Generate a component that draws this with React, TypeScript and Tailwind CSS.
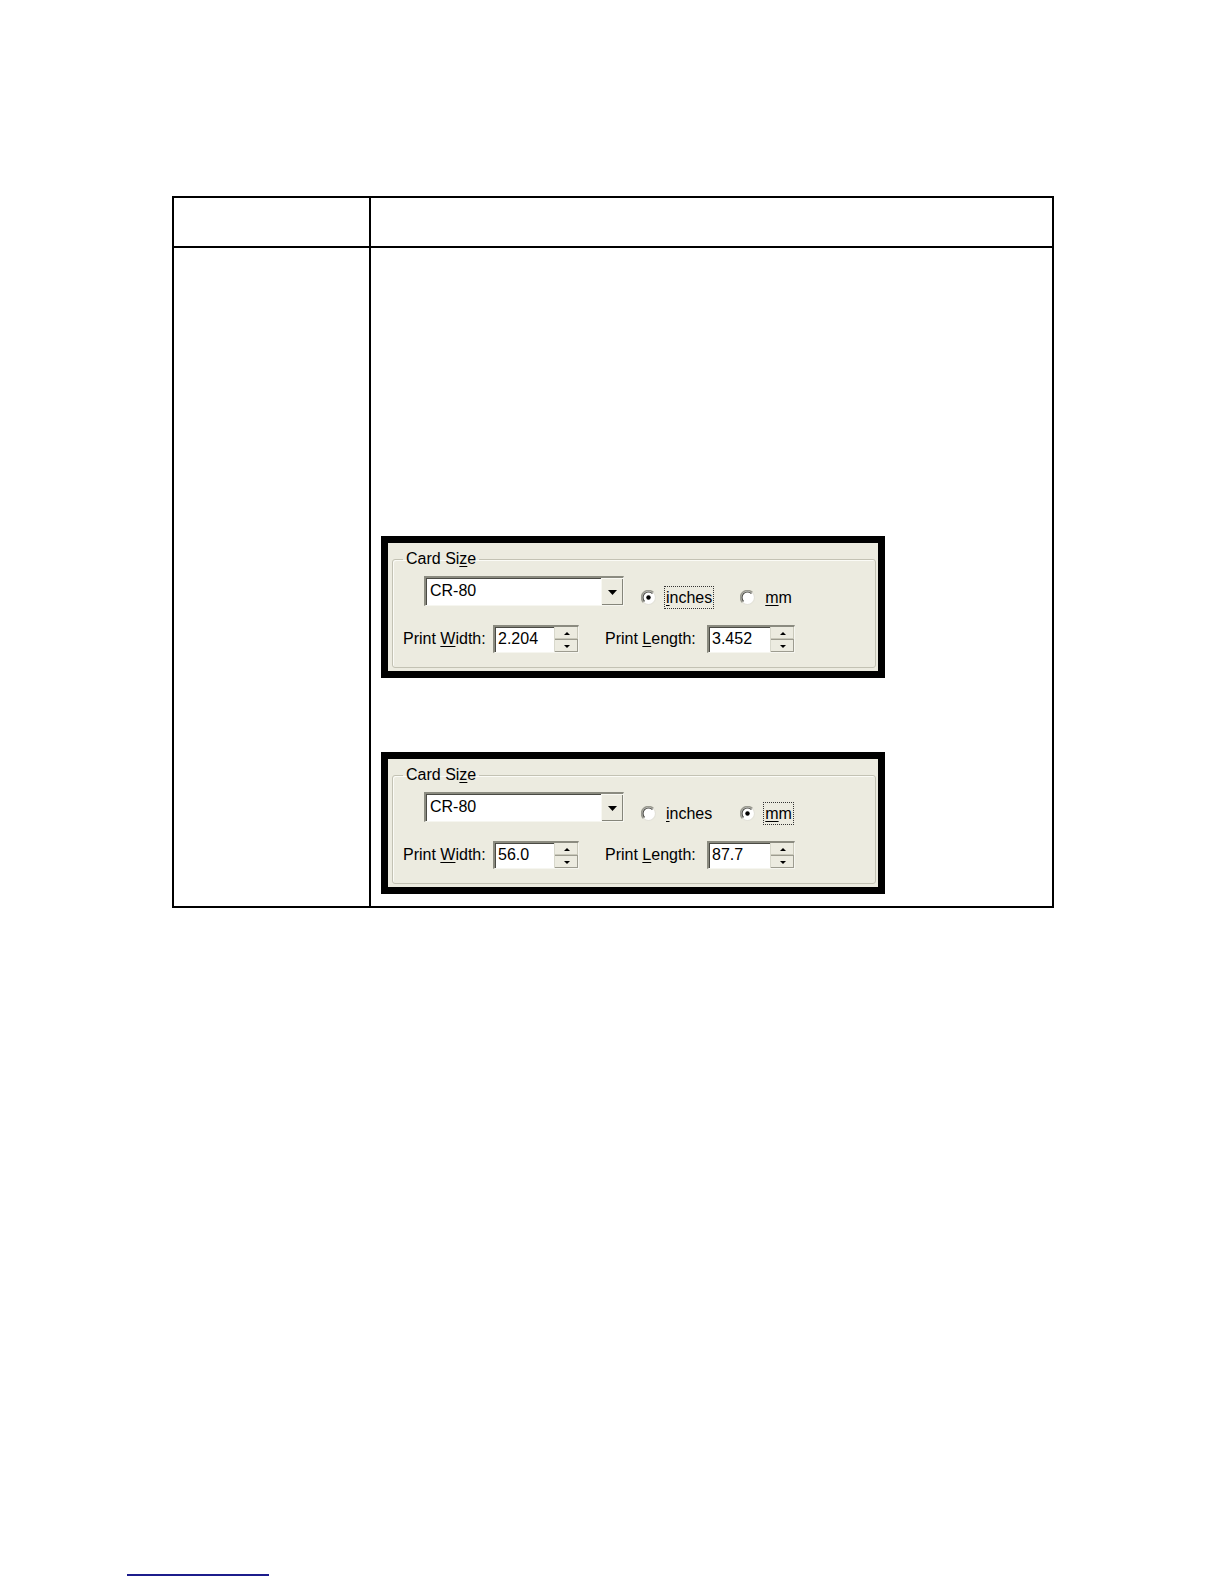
import type { ReactNode } from "react";

// Windows-classic style controls used by the Card Size dialog snapshots

function Radio({ checked }: { checked: boolean }) {
  return (
    <svg width="15" height="15" viewBox="0 0 15 15" className="shrink-0">
      <circle cx="7.5" cy="7.5" r="7" fill="#ffffff" />
      <path d="M2.55 12.45 A7 7 0 0 1 12.45 2.55" fill="none" stroke="#9a9a90" strokeWidth="1.6" />
      <path d="M3.6 11.4 A5.5 5.5 0 0 1 11.4 3.6" fill="none" stroke="#4a4a44" strokeWidth="1.2" />
      <path d="M12.45 2.55 A7 7 0 0 1 2.55 12.45" fill="none" stroke="#e4e3da" strokeWidth="1.2" />
      {checked && <circle cx="7.5" cy="7.5" r="2.2" fill="#000000" />}
    </svg>
  );
}

function DownArrow({ w = 9, h = 5 }: { w?: number; h?: number }) {
  return (
    <svg width={w} height={h} viewBox={`0 0 ${w} ${h}`}>
      <polygon points={`0,0 ${w},0 ${w / 2},${h}`} fill="#000000" />
    </svg>
  );
}

function Spinner() {
  return (
    <div className="flex flex-col w-[24px] h-full border-l border-[#d8d8cc]">
      <div className="flex-1 flex items-center justify-center bg-[#ecebe0] border-b border-[#9d9c90] shadow-[inset_-1px_-1px_0_#c9c8ba]">
        <svg width="6" height="3" viewBox="0 0 6 3">
          <polygon points="0,3 6,3 3,0" fill="#000000" />
        </svg>
      </div>
      <div className="flex-1 flex items-center justify-center bg-[#ecebe0] shadow-[inset_-1px_-1px_0_#9d9c90]">
        <svg width="6" height="3" viewBox="0 0 6 3">
          <polygon points="0,0 6,0 3,3" fill="#000000" />
        </svg>
      </div>
    </div>
  );
}

function SpinBox({ value, width }: { value: string; width: string }) {
  return (
    <div
      className={`${width} h-[28px] flex bg-white border-t-2 border-l-2 border-[#8b8b80] border-r border-b border-r-[#f6f6f0] border-b-[#f6f6f0] shadow-[inset_1px_1px_0_#4a4a44]`}
    >
      <span className="flex-1 pl-[3px] leading-[24px]">{value}</span>
      <Spinner />
    </div>
  );
}

function Mnemonic({ children }: { children: ReactNode }) {
  return <span className="underline underline-offset-2">{children}</span>;
}

function CardSizeDialog({ unit, width, length }: { unit: "inches" | "mm"; width: string; length: string }) {
  return (
    <div className="w-[504px] h-[142px] border-[7px] border-black bg-[#ecebe0]">
      <div className="pl-[4px] pr-[2px] pt-[7px]">
        <fieldset className="h-[118px] border border-[#c3c2b4] rounded-[3px] shadow-[inset_1px_1px_0_#fbfbf6]">
          <legend className="ml-[10px] px-[3px] leading-[18px]">
            Card Si<Mnemonic>z</Mnemonic>e
          </legend>

          {/* combo + units */}
          <div className="flex items-start pl-[31px] mt-[8px]">
            <div className="w-[200px] h-[30px] flex bg-white border-t-2 border-l-2 border-[#8b8b80] border-r border-b border-r-[#f6f6f0] border-b-[#f6f6f0] shadow-[inset_1px_1px_0_#4a4a44]">
              <span className="flex-1 pl-[4px] leading-[26px]">CR-80</span>
              <div className="w-[22px] flex items-center justify-center bg-[#ecebe0] border-t border-l border-[#f8f8f2] shadow-[inset_-1px_-1px_0_#85857a]">
                <DownArrow />
              </div>
            </div>

            <div className="flex items-center ml-[17px] mt-[10px]">
              <Radio checked={unit === "inches"} />
              <span
                className={`ml-[8px] px-[1px] leading-[21px] border border-dotted ${unit === "inches" ? "border-[#333]" : "border-transparent"}`}
              >
                <Mnemonic>i</Mnemonic>nches
              </span>
              <div className="ml-[26px]">
                <Radio checked={unit === "mm"} />
              </div>
              <span
                className={`ml-[8px] px-[1px] leading-[21px] border border-dotted ${unit === "mm" ? "border-[#333]" : "border-transparent"}`}
              >
                <Mnemonic>m</Mnemonic>m
              </span>
            </div>
          </div>

          {/* width / length */}
          <div className="flex items-center pl-[10px] mt-[16px]">
            <span className="w-[90px]">
              Print <Mnemonic>W</Mnemonic>idth:
            </span>
            <SpinBox value={width} width="w-[86px]" />
            <span className="ml-[26px] w-[102px]">
              Print <Mnemonic>L</Mnemonic>ength:
            </span>
            <SpinBox value={length} width="w-[88px]" />
          </div>
        </fieldset>
      </div>
    </div>
  );
}

export default function App() {
  return (
    <div className="w-[1224px] h-[1584px] bg-white pt-[196px] text-[16px] text-black font-['Liberation_Sans',Arial,sans-serif]">
      <div className="ml-[172px] w-[882px] border-2 border-black">
        {/* header row */}
        <div className="flex h-[50px] border-b-2 border-black">
          <div className="w-[197px] border-r-2 border-black" />
          <div className="flex-1" />
        </div>

        {/* body row */}
        <div className="flex">
          <div className="w-[197px] border-r-2 border-black" />
          <div className="flex-1 pl-[10px] pt-[288px] pb-[12px]">
            <CardSizeDialog unit="inches" width="2.204" length="3.452" />
            <div className="h-[74px]" />
            <CardSizeDialog unit="mm" width="56.0" length="87.7" />
          </div>
        </div>
      </div>

      {/* footer link rule */}
      <div className="ml-[127px] mt-[666px] w-[142px] h-[2px] bg-[#1c1c8c]" />
    </div>
  );
}
